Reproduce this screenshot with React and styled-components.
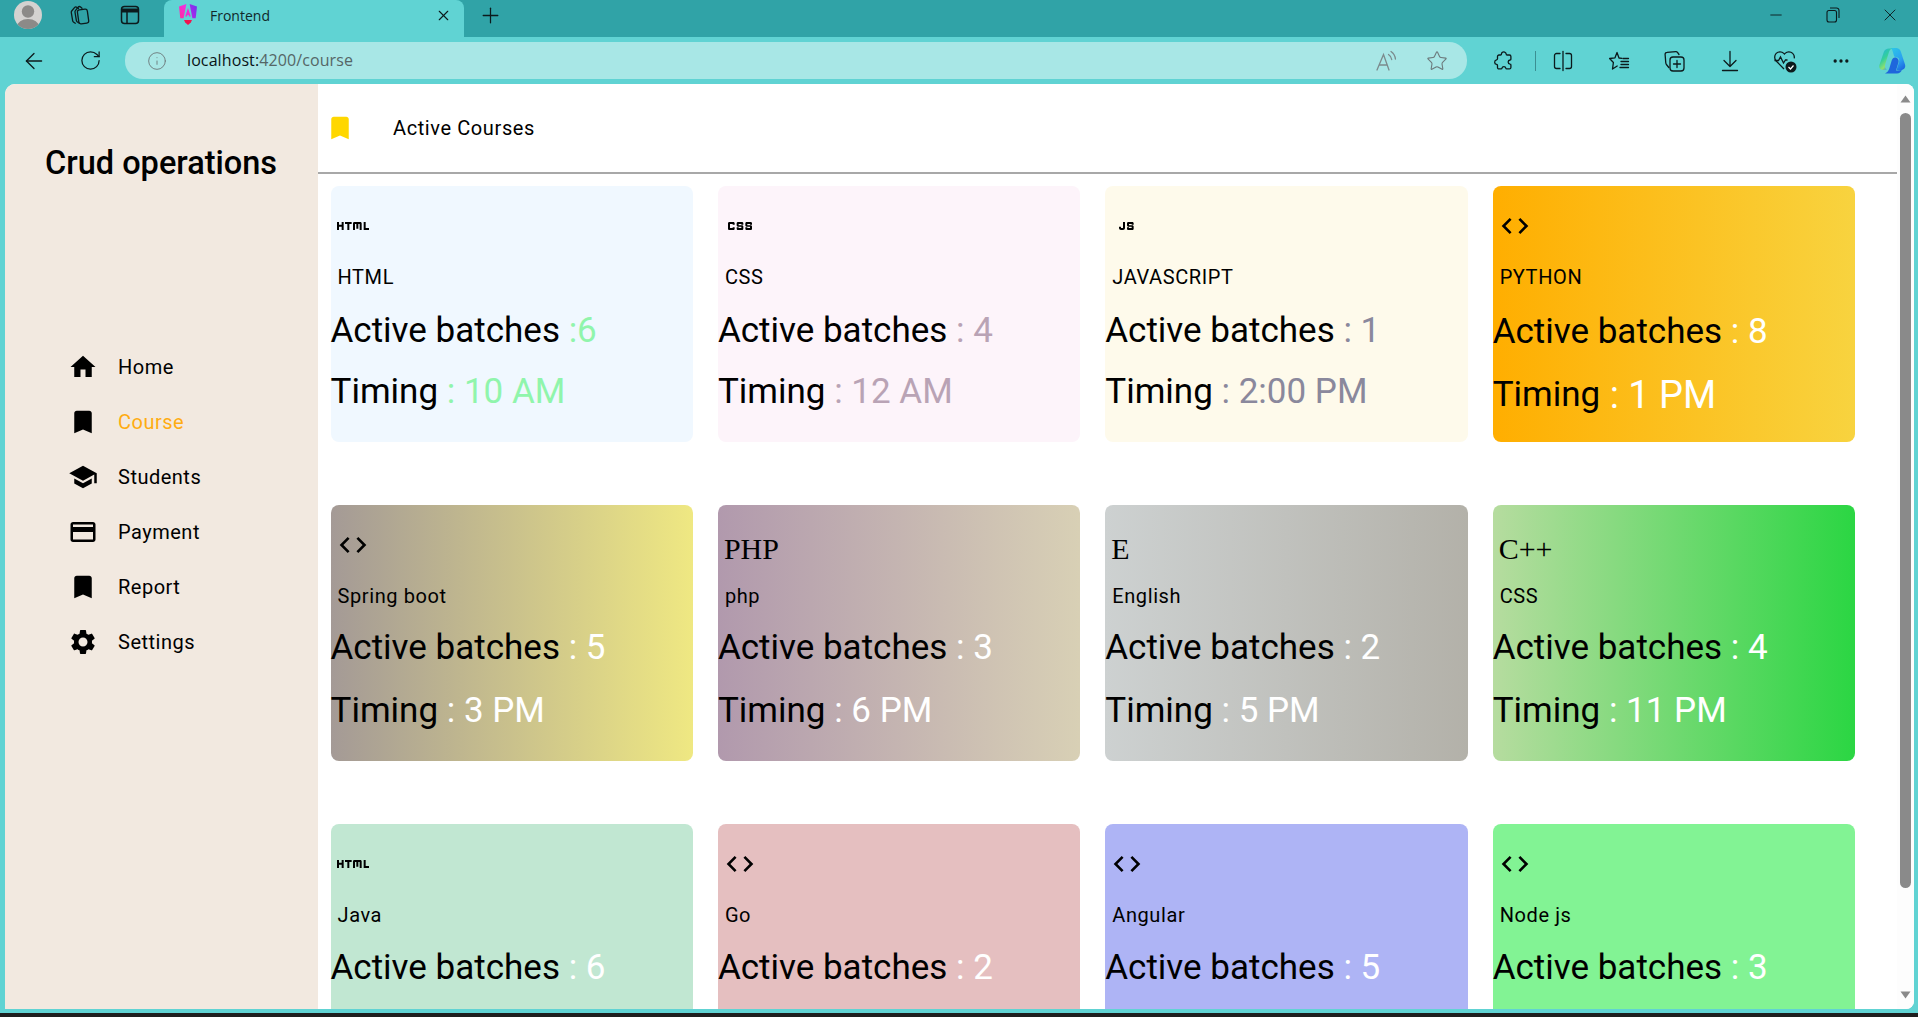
import React from 'react';
import styled, { createGlobalStyle } from 'styled-components';
import {
  ArrowLeft, RotateCw, Info, Star, MoreHorizontal, X, Plus, Minus,
} from 'lucide-react';
import {
  MdHome, MdBookmark, MdSchool, MdCreditCard, MdSettings, MdCode, MdHtml, MdCss, MdJavascript,
} from 'react-icons/md';

const GlobalStyle = createGlobalStyle`
  html, body {
    margin: 0;
    height: 100%;
    overflow: hidden;
    background: #60d3d3;
    font-family: Roboto, "Liberation Sans", sans-serif;
  }
  * {
    box-sizing: border-box;
  }
`;

const Browser = styled.div`
  height: 1017px;
  display: flex;
  flex-direction: column;
  background: #60d3d3;
  border-bottom: 4px solid #1e1e1e;
`;

const TabStrip = styled.div`
  height: 37px;
  flex: none;
  display: flex;
  align-items: center;
  padding-left: 2.5px;
  background: #30a3a7;
  color: #0c1a1c;
`;

const Slot = styled.div`
  width: ${({ $w }) => $w || 51}px;
  height: 100%;
  flex: none;
  display: flex;
  align-items: center;
  justify-content: center;
`;

const TabSlot = styled(Slot)`
  padding-bottom: 7px;
`;

const Avatar = styled.div`
  width: 28px;
  height: 28px;
  border-radius: 50%;
  overflow: hidden;
  background: #d4d2d0;
`;

const Tab = styled.div`
  width: 300px;
  height: 37px;
  flex: none;
  margin-left: 8.5px;
  padding: 0 12px 7px 14px;
  display: flex;
  align-items: center;
  background: #60d3d3;
  border-radius: 8px 8px 0 0;
`;

const TabTitle = styled.span`
  flex: 1;
  margin-left: 12px;
  font-family: "Open Sans", sans-serif;
  font-size: 14px;
  color: #10282a;
`;

const Spacer = styled.div`
  flex: 1;
`;

const Toolbar = styled.div`
  height: 47px;
  flex: none;
  display: flex;
  align-items: center;
  padding-left: 6px;
  color: #0c1a1c;
`;

const AddressBar = styled.div`
  width: 1342px;
  height: 37px;
  margin: 0 9px 0 7px;
  padding-left: 22px;
  display: flex;
  align-items: center;
  background: #a8e7e6;
  border-radius: 18px;
`;

const Url = styled.div`
  flex: 1;
  margin-left: 20px;
  padding-bottom: 1px;
  font-family: "Open Sans", sans-serif;
  font-size: 16px;
  letter-spacing: 0.1px;
  color: #566;

  b {
    font-weight: 400;
    color: #081416;
  }
`;

const Separator = styled.div`
  width: 1px;
  height: 20px;
  flex: none;
  margin-left: 3px;
  background: #3b8f92;
`;

const Page = styled.div`
  height: 925px;
  flex: none;
  margin: 0 4px 4px 5px;
  display: flex;
  overflow: hidden;
  background: #fff;
  border-radius: 10px 8px 8px 0;
`;

const Sidebar = styled.aside`
  width: 313px;
  flex: none;
  padding-top: 59px;
  background: #f2e9e0;
`;

const Brand = styled.h1`
  margin: 0 0 156.5px 40px;
  font-size: 32.5px;
  line-height: 40px;
  font-weight: 500;
  color: #000;
`;

const NavList = styled.nav`
  display: flex;
  flex-direction: column;
  padding-left: 63px;
`;

const NavItem = styled.div`
  height: 55px;
  display: flex;
  align-items: center;
  gap: 20px;
  font-size: 20px;
  letter-spacing: 0.5px;
  color: ${({ $active }) => ($active ? '#ffac12' : '#000')};

  svg {
    flex: none;
    color: #000;
  }
`;

const Main = styled.main`
  flex: 1;
  min-width: 0;
  overflow: hidden;
`;

const Header = styled.header`
  height: 90px;
  padding: 0 0 1px 7px;
  display: flex;
  align-items: center;
  gap: 38px;
  border-bottom: 2px solid #a8a8a8;
  font-size: 20px;
  letter-spacing: 0.6px;
  color: #000;

  svg {
    flex: none;
    color: #ffd700;
  }
`;

const Grid = styled.div`
  padding: 12px 0 0 12.5px;
  width: 1537px;
  display: grid;
  grid-template-columns: repeat(4, 1fr);
  column-gap: 25px;
  row-gap: 63px;
`;

const Card = styled.article`
  height: 256px;
  display: flex;
  flex-direction: column;
  background: ${({ $bg }) => $bg};
  border-radius: 8px;
  color: #000;
`;

const Badge = styled.div`
  height: 73px;
  padding: 7px 0 0 6px;
  display: flex;
  align-items: center;
  line-height: 1;

  svg {
    flex: none;
  }
`;

const Letter = styled.span`
  font-family: "Liberation Serif", serif;
  font-size: 30px;
  padding-top: 8px;
`;

const CardTitle = styled.div`
  height: 34px;
  padding: 1px 0 0 7px;
  display: flex;
  align-items: center;
  font-size: 20px;
  letter-spacing: 0.6px;
`;

const Stat = styled.div`
  height: 61px;
  flex: none;
  margin-top: ${({ $mt }) => $mt}px;
  padding-top: 4px;
  display: flex;
  align-items: center;
  font-size: 35px;
  white-space: pre;
`;

const Value = styled.span`
  font-size: ${({ $size }) => $size || 35}px;
  color: ${({ $color }) => $color};
`;

const Scrollbar = styled.div`
  width: 17px;
  flex: none;
  display: flex;
  flex-direction: column;
  align-items: center;
  background: #fdfdfd;
`;

const ArrowBox = styled.div`
  height: 29px;
  flex: none;
  display: flex;
  align-items: center;
  justify-content: center;
  color: #8a8a8a;
`;

const Track = styled.div`
  flex: 1;
  width: 100%;
  padding: 0 3px;
`;

const Thumb = styled.div`
  height: 775px;
  background: #8a8a8a;
  border-radius: 6px;
`;

const Triangle = ({ down }) => (
  <svg width="11" height="8" viewBox="0 0 11 8">
    <path d={down ? 'M0.5 0.5h10L5.5 7.5z' : 'M5.5 0.5l5 7H0.5z'} fill="currentColor" />
  </svg>
);

const AvatarIcon = () => (
  <Avatar>
    <svg width="28" height="28" viewBox="0 0 28 28">
      <circle cx="14" cy="10.5" r="6.2" fill="#8c8a88" />
      <ellipse cx="14" cy="25.5" rx="11" ry="7.5" fill="#8c8a88" />
    </svg>
  </Avatar>
);

const stroke = { fill: 'none', stroke: 'currentColor', strokeWidth: 1.3, strokeLinejoin: 'round', strokeLinecap: 'round' };

const TabsIcon = () => (
  <svg width="22" height="22" viewBox="0 0 22 22" {...stroke}>
    <rect x="10" y="5.5" width="10" height="14" rx="2.2" transform="rotate(-8 15 12)" />
    <path d="M10.5 4.6 9 3.4a1.8 1.8 0 0 0-2.5.2L3.7 7a2 2 0 0 0-.4 1.6l1.4 8.2a2 2 0 0 0 1 1.4l1.6 1" />
    <path d="M14 4.3 12.6 3a1.8 1.8 0 0 0-2.5.2L7.4 6.6a2 2 0 0 0-.4 1.6l1.4 8.4a2 2 0 0 0 1 1.4l1.6 1" />
  </svg>
);

const VerticalTabsIcon = () => (
  <svg width="20" height="20" viewBox="0 0 20 20" fill="none" stroke="currentColor" strokeWidth="1.5">
    <rect x="1.5" y="1.5" width="17" height="17" rx="3" />
    <path d="M2 5.5h16" strokeWidth="4" />
    <path d="M7 6v12.5" />
  </svg>
);

const AngularLogo = () => (
  <svg width="20" height="24" viewBox="0 0 20 24">
    <defs>
      <linearGradient id="ngL" x1="0" y1="1" x2="0.6" y2="0">
        <stop offset="0" stopColor="#ff2a9a" />
        <stop offset="1" stopColor="#f030e0" />
      </linearGradient>
      <linearGradient id="ngR" x1="0" y1="1" x2="1" y2="0">
        <stop offset="0" stopColor="#c020e8" />
        <stop offset="1" stopColor="#6a38f0" />
      </linearGradient>
    </defs>
    <path d="M8.4 1 1 3.6l1.3 11.6 3.3 0z" fill="url(#ngL)" />
    <path d="M11.6 1 19 3.6l-1.3 11.6-3.3 0z" fill="url(#ngR)" />
    <path d="M10 5 7.2 13.5h1.7L9.4 12h1.2l.5 1.5h1.7z" fill="#f02ad0" />
    <path d="M6 17h8l-1.2 2.6L10 22l-2.8-2.4z" fill="#f0144f" />
  </svg>
);

const ReadAloud = () => (
  <svg width="24" height="24" viewBox="0 0 24 24" fill="none" stroke="#7b8a8c" strokeWidth="1.3" strokeLinecap="round">
    <path d="M2 21 8.5 5.5 14 21M4.2 16h8" />
    <path d="M13.5 5.5a7 7 0 0 1 3.2 5M16 2.5a10 10 0 0 1 4.4 7.5" />
  </svg>
);

const PuzzleIcon = () => (
  <svg width="22" height="22" viewBox="0 0 22 22" {...stroke}>
    <path d="M9 2.6c1.6-1.4 4-.6 4.2 1.5 0 .6.3.9.9.9h2.3c.9 0 1.5.6 1.5 1.5v2.7c0 .5-.3.8-.8.8-2.6.2-2.6 4 0 4.2.5 0 .8.3.8.8v2.4c0 .9-.6 1.5-1.5 1.5h-2.6c-.6 0-.9-.3-1-.8-.4-2-3.4-2-3.8 0-.1.5-.4.8-1 .8H6c-.9 0-1.5-.6-1.5-1.5v-2c0-.6-.3-.9-.9-1-2.6-.5-2.6-4 0-4.6.6-.1.9-.4.9-1V6.5c0-.9.6-1.5 1.5-1.5h1.4c.8 0 1.1-.5 1.1-1.2z" />
  </svg>
);

const SplitIcon = () => (
  <svg width="22" height="22" viewBox="0 0 22 22" {...stroke}>
    <path d="M8 3.5H4.5a2 2 0 0 0-2 2v11a2 2 0 0 0 2 2H8" />
    <path d="M14 3.5h3.5a2 2 0 0 1 2 2v11a2 2 0 0 1-2 2H14" />
    <path d="M11 1.5v19" />
  </svg>
);

const FavoritesIcon = () => (
  <svg width="24" height="24" viewBox="0 0 24 24" {...stroke}>
    <path d="M15 9.3 12 9 10 3.5 8 8.800 2.600 9.500l3.800 4-.9 6.500 4.700-3" />
    <path d="M14 12.500h7.500M14 15.500h7.500M13 18.500h8.500M16 9.500h5.500" />
  </svg>
);

const CollectionsIcon = () => (
  <svg width="24" height="24" viewBox="0 0 24 24" {...stroke}>
    <path d="M17 5.500 15.500 3.400a2 2 0 0 0-1.600-.7L5 3.300a2 2 0 0 0-1.900 2.200l.7 8.500c.1.800.4 1.300 1 2l2 2.500" />
    <rect x="8" y="8" width="14" height="14" rx="3" />
    <path d="M15 11.500v7M11.500 15h7" />
  </svg>
);

const DownloadIcon = () => (
  <svg width="22" height="24" viewBox="0 0 22 24" {...stroke}>
    <path d="M11 2.500v15M5 11.500l6 6 6-6M3.500 21.500h15" />
  </svg>
);

const HealthIcon = () => (
  <svg width="26" height="26" viewBox="0 0 26 26" fill="none">
    <path
      d="M12 21 4.200 13a5.500 5.500 0 0 1 0-7.600 5.300 5.300 0 0 1 7.600 0l.6.6.7-.6a5.300 5.300 0 0 1 7.600 0 5.400 5.400 0 0 1 1.500 5"
      stroke="currentColor"
      strokeWidth="1.3"
    />
    <path d="M2.500 12.500h4l2-3.500 3 6 2-3h2" stroke="currentColor" strokeWidth="1.3" />
    <circle cx="19" cy="19" r="5.500" fill="#0c1a1c" />
    <path d="M16.500 19l2 2 3-3.500" stroke="#fff" strokeWidth="1.2" />
  </svg>
);

const CopilotLogo = () => (
  <svg width="30" height="30" viewBox="0 0 30 30">
    <defs>
      <linearGradient id="cpR" x1="0.2" y1="0" x2="0.8" y2="1">
        <stop offset="0" stopColor="#2cc4e8" />
        <stop offset="0.6" stopColor="#2aa0f0" />
        <stop offset="1" stopColor="#1c68e0" />
      </linearGradient>
      <linearGradient id="cpL" x1="0" y1="0" x2="0.6" y2="1">
        <stop offset="0" stopColor="#1fb0e8" />
        <stop offset="0.5" stopColor="#34d09a" />
        <stop offset="0.8" stopColor="#8fe070" />
        <stop offset="1" stopColor="#3a90e0" />
      </linearGradient>
    </defs>
    <path d="M12 2h6c2.5 0 4 1.200 4.800 3.500L27 18.500c.9 3-1 5.500-4 5.500h-4.500l2.500-8c.7-2.400 0-4-1.800-4.500l-3-1-1.700-5.700C14 3 13.200 2.300 12 2z" fill="url(#cpR)" />
    <path d="M11 2.500h3.500c-2 .4-3 1.800-3.600 3.800L7.300 18c-.8 2.600-.2 4.500 1.500 5.500l-3.300.4C2.500 24.300.6 22 1.400 19L5.800 6C6.600 3.700 8.400 2.500 11 2.500z" fill="url(#cpL)" />
    <path d="M17 11.500c-1.600 0-2.600.9-3.300 3l-2.400 8c-.7 2.300-2 4-4.300 5h12c2.400 0 4-1.200 4.800-3.500l-4.500.5H18l2.500-8.200c.6-2.300-.8-4.800-3.500-4.800z" fill="#1e66dc" />
  </svg>
);

const navItems = [
  { label: 'Home', Icon: MdHome },
  { label: 'Course', Icon: MdBookmark, active: true },
  { label: 'Students', Icon: MdSchool },
  { label: 'Payment', Icon: MdCreditCard },
  { label: 'Report', Icon: MdBookmark },
  { label: 'Settings', Icon: MdSettings },
];

// top1/top2 are the small differences in how far the two stat lines sit in each card
const courses = [
  { title: 'HTML', Icon: MdHtml, bg: '#f0f8ff', batches: ' :6', timing: ' : 10 AM', color: '#90f5ac', top1: 5, top2: 0 },
  { title: 'CSS', Icon: MdCss, bg: '#fdf4fa', batches: ' : 4', timing: ' : 12 AM', color: '#b9a3b5', top1: 5, top2: 0 },
  { title: 'JAVASCRIPT', Icon: MdJavascript, bg: '#fefaeb', batches: ' : 1', timing: ' : 2:00 PM', color: '#8a889c', top1: 5, top2: 0 },
  { title: 'PYTHON', Icon: MdCode, bg: 'linear-gradient(90deg, #ffae00, #f8d33f)', batches: ' : 8', timing: ' : 1 PM', color: '#fff', top1: 6, top2: 2, valueSize: 38 },
  { title: 'Spring boot', Icon: MdCode, bg: 'linear-gradient(90deg, #a49a96, #efe882)', batches: ' : 5', timing: ' : 3 PM', color: '#fff', top1: 3, top2: 2 },
  { title: 'php', letter: 'PHP', bg: 'linear-gradient(90deg, #b199ad, #d8d0b5)', batches: ' : 3', timing: ' : 6 PM', color: '#fff', top1: 3, top2: 2 },
  { title: 'English', letter: 'E', bg: 'linear-gradient(90deg, #cdd1d1, #b3b1a9)', batches: ' : 2', timing: ' : 5 PM', color: '#fff', top1: 3, top2: 2 },
  { title: 'CSS', letter: 'C++', bg: 'linear-gradient(90deg, #b6dc9f, #2bd643)', batches: ' : 4', timing: ' : 11 PM', color: '#fff', top1: 3, top2: 2 },
  { title: 'Java', Icon: MdHtml, bg: '#c1e7d2', batches: ' : 6', color: '#fff', top1: 4 },
  { title: 'Go', Icon: MdCode, bg: '#e5bfc0', batches: ' : 2', color: '#fff', top1: 4 },
  { title: 'Angular', Icon: MdCode, bg: '#aeb4f5', batches: ' : 5', color: '#fff', top1: 4 },
  { title: 'Node js', Icon: MdCode, bg: '#82f394', batches: ' : 3', color: '#fff', top1: 4 },
];

const CourseCard = ({ course }) => {
  const { title, Icon, letter, bg, batches, timing, color, top1, top2, valueSize } = course;
  return (
    <Card $bg={bg}>
      <Badge>
        {Icon ? <Icon size={32} /> : <Letter>{letter}</Letter>}
      </Badge>
      <CardTitle>{title}</CardTitle>
      <Stat $mt={top1}>
        Active batches<Value $color={color}>{batches}</Value>
      </Stat>
      {timing && (
        <Stat $mt={top2}>
          Timing<Value $color={color} $size={valueSize}>{timing}</Value>
        </Stat>
      )}
    </Card>
  );
};

export default function App() {
  return (
    <Browser>
      <GlobalStyle />
      <TabStrip>
        <TabSlot><AvatarIcon /></TabSlot>
        <TabSlot><TabsIcon /></TabSlot>
        <TabSlot><VerticalTabsIcon /></TabSlot>
        <Tab>
          <AngularLogo />
          <TabTitle>Frontend</TabTitle>
          <X size={17} strokeWidth={1.6} />
        </Tab>
        <TabSlot $w={52}><Plus size={25} strokeWidth={1.2} /></TabSlot>
        <Spacer />
        <TabSlot $w={57}><Minus size={18} strokeWidth={1.2} /></TabSlot>
        <TabSlot $w={57}>
          <svg width="14" height="16" viewBox="0 0 14 16" fill="none" stroke="currentColor" strokeWidth="1.1">
            <rect x="1" y="3.5" width="9.5" height="11.5" rx="2" />
            <path d="M4 1h6.5a2.5 2.5 0 0 1 2.5 2.5V11" />
          </svg>
        </TabSlot>
        <TabSlot $w={57}><X size={20} strokeWidth={1.1} /></TabSlot>
      </TabStrip>
      <Toolbar>
        <Slot $w={56}><ArrowLeft size={26} strokeWidth={1.2} /></Slot>
        <Slot $w={56}><RotateCw size={23} strokeWidth={1.3} /></Slot>
        <AddressBar>
          <Info size={20} strokeWidth={1.1} color="#6c7a7c" />
          <Url><b>localhost:</b>4200/course</Url>
          <Slot $w={50}><ReadAloud /></Slot>
          <Slot $w={50}><Star size={22} strokeWidth={1.2} color="#6c7a7c" /></Slot>
          <Slot $w={5} />
        </AddressBar>
        <Slot $w={55.5}><PuzzleIcon /></Slot>
        <Separator />
        <Slot $w={55.5}><SplitIcon /></Slot>
        <Slot $w={55.5}><FavoritesIcon /></Slot>
        <Slot $w={55.5}><CollectionsIcon /></Slot>
        <Slot $w={55.5}><DownloadIcon /></Slot>
        <Slot $w={55.5}><HealthIcon /></Slot>
        <Slot $w={55.5}><MoreHorizontal size={20} strokeWidth={2} /></Slot>
        <Slot $w={48}><CopilotLogo /></Slot>
      </Toolbar>
      <Page>
        <Sidebar>
          <Brand>Crud operations</Brand>
          <NavList>
            {navItems.map(({ label, Icon, active }) => (
              <NavItem key={label} $active={active}>
                <Icon size={30} />
                {label}
              </NavItem>
            ))}
          </NavList>
        </Sidebar>
        <Main>
          <Header>
            <MdBookmark size={30} />
            Active Courses
          </Header>
          <Grid>
            {courses.map((course, i) => (
              <CourseCard key={i} course={course} />
            ))}
          </Grid>
        </Main>
        <Scrollbar>
          <ArrowBox><Triangle /></ArrowBox>
          <Track><Thumb /></Track>
          <ArrowBox><Triangle down /></ArrowBox>
        </Scrollbar>
      </Page>
    </Browser>
  );
}
